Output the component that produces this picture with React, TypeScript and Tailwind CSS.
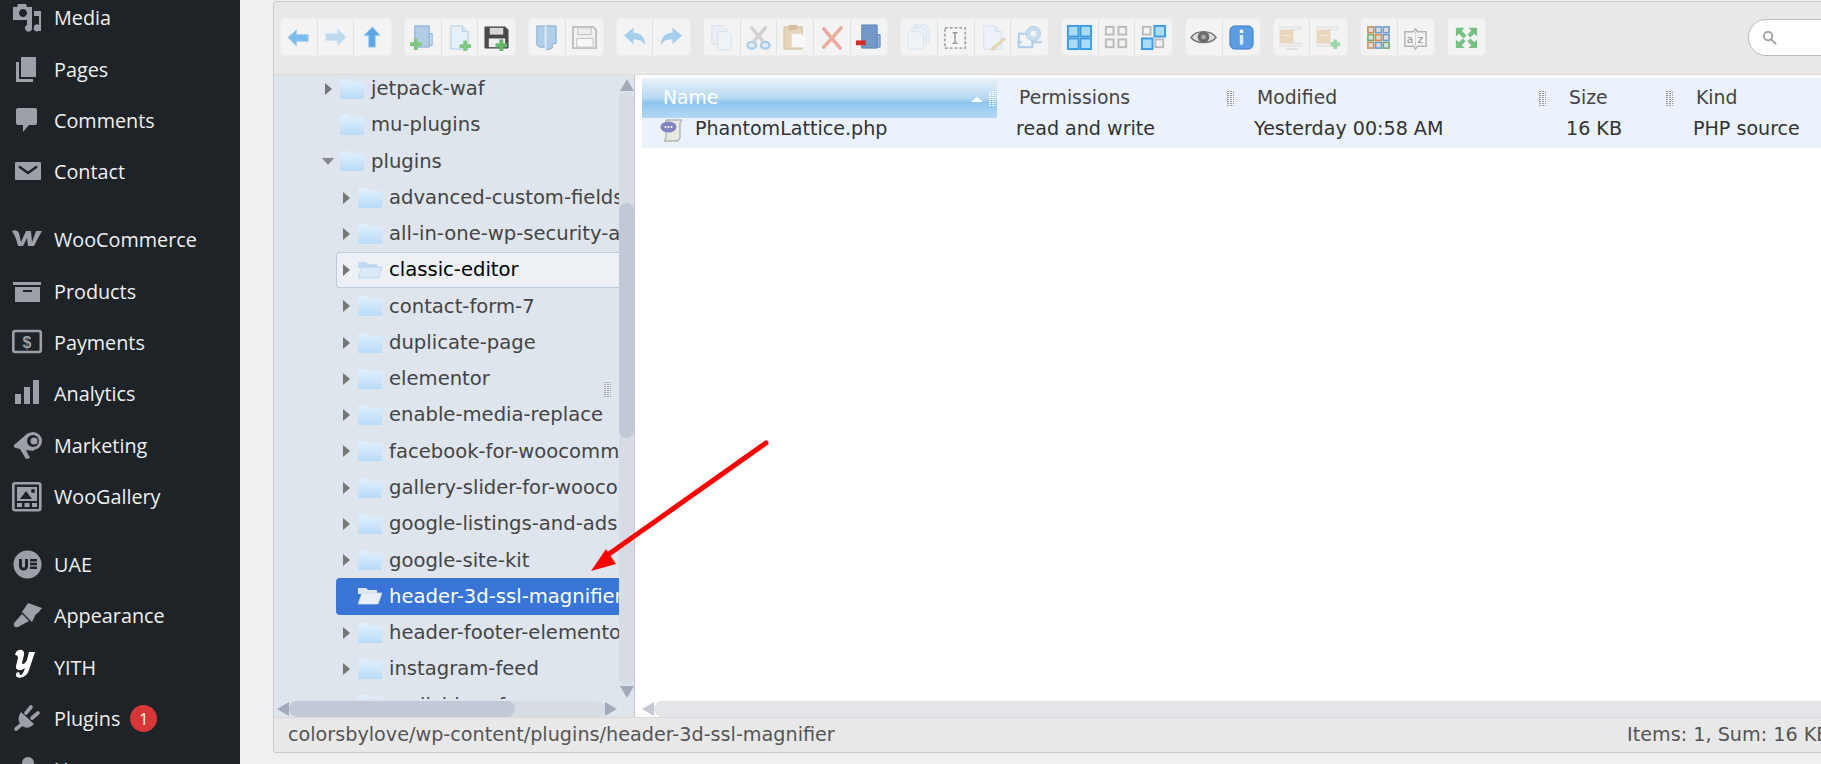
import type { ReactNode } from "react";

const sans = "font-['Open_Sans',sans-serif]";

const G = ({ children, o = 1 }: { children: ReactNode; o?: number }) => (
  <svg viewBox="0 0 28 28" width="27" height="27" opacity={o} className="blur-[0.35px]">
    {children}
  </svg>
);

// ---- toolbar icons ----
const Arrow = ({ dir, o = 1, fill = "#7dbcec" }: { dir: number; o?: number; fill?: string }) => (
  <G o={o}>
    <path transform={`rotate(${dir} 14 14)`} d="M3 14 12 6v5h12v7H12v5z" fill={fill} stroke="#a5d1f2" strokeWidth="1" />
  </G>
);
const BookPlus = () => (
  <G>
    <path d="M6 2h15v22H6z" fill="#b4cde6" stroke="#86abd2" />
    <path d="M21 10h3v12h-3z" fill="#cfe0f0" stroke="#86abd2" />
    <path d="M1 19h4v-4h4v4h4v4H9v4H5v-4H1z" fill="#7fc77f" />
  </G>
);
const PagePlus = () => (
  <G>
    <path d="M5 2h12l6 6v18H5z" fill="#e6f0f9" stroke="#b0cee8" />
    <path d="M17 2v6h6" fill="#d3e5f4" stroke="#b0cee8" />
    <path d="M14 21h4v-4h4v4h4v4h-4v3h-4v-3h-4z" fill="#7fc77f" />
  </G>
);
const Disk = ({ plus, o = 1 }: { plus?: boolean; o?: number }) => (
  <G o={o}>
    <path d="M2 3h21l3 3v19H2z" fill={plus ? "#484848" : "#f2f2f2"} stroke={plus ? "#555" : "#b4b4b4"} strokeWidth={plus ? 1 : 2} />
    <path d="M7 4h14v7H7z" fill={plus ? "#d8d8d8" : "#eee"} stroke={plus ? "none" : "#b4b4b4"} />
    <path d="M6 15h17v9H6z" fill={plus ? "#f0f0f0" : "#fafafa"} stroke={plus ? "none" : "#b4b4b4"} />
    {plus && <path d="M13 20h4v-4h4v4h4v4h-4v4h-4v-4h-4z" fill="#68b468" />}
  </G>
);
const BookOpen = () => (
  <G>
    <path d="M4 2h20v18l-4 1v4l-6 2-2-3H7l-3-2z" fill="#b0cde9" stroke="#86abd2" />
    <path d="M13 2v25" stroke="#dfebf7" strokeWidth="2" />
  </G>
);
const Curve = ({ flip, o = 0.75 }: { flip?: boolean; o?: number }) => (
  <G o={o}>
    <path transform={flip ? "translate(28 0) scale(-1 1)" : undefined} d="M3 12 13 4v5c8 0 12 5 12 13-3-5-6-6-12-6v5z" fill="#8cc2ec" />
  </G>
);
const Copy = () => (
  <G o={0.5}>
    <path d="M4 2h12l3 3v16H4z" fill="#e6eff8" stroke="#b5d0e8" />
    <path d="M10 8h11l3 3v16H10z" fill="#eef4fa" stroke="#b5d0e8" />
  </G>
);
const Scissors = () => (
  <G o={0.7}>
    <path d="M22 3 9 18M6 3l13 15" stroke="#c4c4c4" strokeWidth="3.5" />
    <ellipse cx="7" cy="22" rx="4.5" ry="3.5" fill="#d7e9f7" stroke="#8cbfe6" strokeWidth="2.5" />
    <ellipse cx="21" cy="22" rx="4.5" ry="3.5" fill="#d7e9f7" stroke="#8cbfe6" strokeWidth="2.5" />
  </G>
);
const Clipboard = () => (
  <G o={0.8}>
    <path d="M2 3h19v23H2z" fill="#e4ceae" stroke="#cfb48e" />
    <path d="M7 1h9v5H7z" fill="#cdb08a" />
    <path d="M10 10h10l4 4v10H10z" fill="#fbfbfb" />
  </G>
);
const RedX = () => (
  <G o={0.75}>
    <path d="M6 5 23 25M24 4 6 24" stroke="#e88c7c" strokeWidth="3.5" strokeLinecap="round" />
    <path d="M6 5 23 25M24 4 6 24" stroke="#f4c6bd" strokeWidth="1" strokeDasharray="1 2" />
  </G>
);
const BookMinus = () => (
  <G>
    <path d="M7 1h16v24H7z" fill="#7399c8" stroke="#5d86b6" />
    <path d="M23 11h3v13h-3z" fill="#94b3d6" stroke="#5d86b6" />
    <path d="M1 17h10v5H1z" fill="#d42d2d" />
  </G>
);
const Pages = () => (
  <G o={0.5}>
    <path d="M9 1h11l4 3v15H9z" fill="#e4eef8" stroke="#bcd4ea" />
    <path d="M6 4h11l4 3v15H6z" fill="#e8f1f9" stroke="#bcd4ea" />
    <path d="M2 8h12l4 3v15H2z" fill="#eef4fa" stroke="#bcd4ea" />
  </G>
);
const RenameBox = () => (
  <G>
    <rect x="3" y="4" width="21" height="21" fill="#f7f7f7" stroke="#aaa" strokeWidth="2" strokeDasharray="3 2" />
    <path d="M11 9h5M11 20h5M13.5 9v11" stroke="#999" strokeWidth="1.5" fill="none" />
  </G>
);
const PagePen = () => (
  <G o={0.7}>
    <path d="M5 2h12l6 6v18H5z" fill="#eaf2fa" stroke="#c5d9ec" />
    <path d="M17 2v6h6" fill="#d8e7f5" stroke="#c5d9ec" />
    <path d="m12 26 14-12 1 2-13 12z" fill="#e6cf9a" stroke="#c8ac70" strokeWidth=".6" />
  </G>
);
const ResizeImg = () => (
  <G o={0.6}>
    <rect x="3" y="10" width="14" height="14" fill="none" stroke="#7fb4e0" strokeWidth="2" />
    <circle cx="18" cy="10" r="7.5" fill="#a8d0ee" stroke="#7fb4e0" />
    <circle cx="18" cy="10" r="3" fill="#eef6fc" />
    <path d="M1 19h5M16 19h11" stroke="#7fb4e0" strokeWidth="2" />
  </G>
);
const Grid4 = ({ on }: { on: number[] }) => (
  <G>
    {[
      [2, 2],
      [15, 2],
      [2, 15],
      [15, 15],
    ].map(([x, y], i) =>
      on.includes(i) ? (
        <rect key={i} x={x} y={y} width="11" height="11" fill="#a9dcfb" stroke="#3d9be0" strokeWidth="2" />
      ) : (
        <rect key={i} x={x + 1} y={y + 1} width="8" height="8" fill="#f3f3f3" stroke="#bbb" strokeWidth="2" />
      ),
    )}
  </G>
);
const Eye = () => (
  <G>
    <path d="M1 14c5-8 21-8 26 0-5 7-21 7-26 0z" fill="#ddd" stroke="#777" strokeWidth="1.5" />
    <circle cx="14" cy="13.5" r="6" fill="#6a6a6a" />
    <circle cx="14" cy="13.5" r="2.5" fill="#aaa" />
  </G>
);
const Info = () => (
  <G>
    <rect x="2" y="2" width="24" height="24" rx="5" fill="#5a9de2" stroke="#3d7cc4" />
    <rect x="12.2" y="6" width="3.6" height="3.4" fill="#fff" />
    <rect x="12.2" y="11.5" width="3.6" height="10" fill="#d8e9f9" />
  </G>
);
const Archive = ({ plus }: { plus?: boolean }) => (
  <G o={0.85}>
    <path d="M2 3h22v3H13v14h11v3H2z" fill="#eee" stroke="#ddd" />
    <path d="M2 6h14v14H2z" fill="#e8d2b3" />
    <path d="M5 12h8" stroke="#fff" strokeDasharray="2 1" />
    {plus && <path d="M16 19h3v-3h4v3h3v4h-3v3h-4v-3h-3z" fill="#8ed09a" />}
    {!plus && <path d="M8 26h12" stroke="#ddd" strokeWidth="2" />}
  </G>
);
const ColorGrid = () => {
  const c = ["#c58f5c", "#6d9ad4", "#6d9ad4", "#6dae6d", "#d68f4f", "#6d9ad4", "#c58f5c", "#6d9ad4", "#6dae6d"];
  return (
    <G>
      {c.map((f, i) => (
        <rect key={i} x={3 + (i % 3) * 8} y={3 + Math.floor(i / 3) * 8} width="6" height="6" fill="#ddd" stroke={f} strokeWidth="1.6" />
      ))}
    </G>
  );
};
const Sort = () => (
  <G o={0.85}>
    <path d="M3 8h9l2-3 2 3h9v15H16l-2 3-2-3H3z" fill="#f5f5f5" stroke="#aaa" strokeWidth="1.5" />
    <path d="M14 8v15" stroke="#ccc" />
    <text x="5" y="20" fontSize="11" fill="#777" fontFamily="DejaVu Sans">a</text>
    <text x="16" y="20" fontSize="11" fill="#777" fontFamily="DejaVu Sans">z</text>
  </G>
);
const Full = () => (
  <G>
    <path d="M3 4h9l-3 3 5 5-3 3-5-5-3 3zM25 4v9l-3-3-4 4-3-3 4-4-3-3zM3 25v-9l3 3 4-4 3 3-4 4 3 3zM25 25h-9l3-3-4-4 3-3 4 4 3-3z" fill="#74c180" />
  </G>
);

const groups: ReactNode[][] = [
  [<Arrow dir={0} />, <Arrow dir={180} o={0.45} />, <Arrow dir={90} fill="#5aa6e6" />],
  [<BookPlus />, <PagePlus />, <Disk plus />],
  [<BookOpen />, <Disk o={0.8} />],
  [<Curve />, <Curve flip />],
  [<Copy />, <Scissors />, <Clipboard />, <RedX />, <BookMinus />],
  [<Pages />, <RenameBox />, <PagePen />, <ResizeImg />],
  [<Grid4 on={[0, 1, 2, 3]} />, <Grid4 on={[]} />, <Grid4 on={[1, 2]} />],
  [<Eye />, <Info />],
  [<Archive />, <Archive plus />],
  [<ColorGrid />, <Sort />],
  [<Full />],
];

// ---- tree ----
const Folder = ({ open, selected }: { open?: boolean; selected?: boolean }) => (
  <svg viewBox="0 0 24 22" width="24" height="22" className="shrink-0">
    <defs>
      <linearGradient id="fold" x1="0" y1="0" x2="0" y2="1">
        <stop offset="0" stopColor="#e2f1fe" />
        <stop offset="1" stopColor="#b9dbf8" />
      </linearGradient>
    </defs>
    {open ? (
      <>
        <path d="M0 3h8l2 2h9v4H0z" fill={selected ? "#dfe8f6" : "#c0daf4"} />
        <path d="M4 8h20l-4 11H0z" fill={selected ? "#e9eff9" : "#dbe9f8"} stroke={selected ? "#cfe0f5" : "#a9cdf0"} strokeWidth=".7" />
      </>
    ) : (
      <path d="M0 2.5 2 1h6l2 2.5h14V21H0z" fill="url(#fold)" />
    )}
  </svg>
);

type Row = { name: string; level: 1 | 2; arrow?: "right" | "down"; kind?: "hover" | "selected" };

const rows: Row[] = [
  { name: "jetpack-waf", level: 1, arrow: "right" },
  { name: "mu-plugins", level: 1 },
  { name: "plugins", level: 1, arrow: "down" },
  { name: "advanced-custom-fields", level: 2, arrow: "right" },
  { name: "all-in-one-wp-security-and-firewall", level: 2, arrow: "right" },
  { name: "classic-editor", level: 2, arrow: "right", kind: "hover" },
  { name: "contact-form-7", level: 2, arrow: "right" },
  { name: "duplicate-page", level: 2, arrow: "right" },
  { name: "elementor", level: 2, arrow: "right" },
  { name: "enable-media-replace", level: 2, arrow: "right" },
  { name: "facebook-for-woocommerce", level: 2, arrow: "right" },
  { name: "gallery-slider-for-woocommerce", level: 2, arrow: "right" },
  { name: "google-listings-and-ads", level: 2, arrow: "right" },
  { name: "google-site-kit", level: 2, arrow: "right" },
  { name: "header-3d-ssl-magnifier", level: 2, kind: "selected" },
  { name: "header-footer-elementor", level: 2, arrow: "right" },
  { name: "instagram-feed", level: 2, arrow: "right" },
  { name: "mailchimp-for-woocommerce", level: 2, arrow: "right" },
];

function TreeRow({ r }: { r: Row }) {
  const bg =
    r.kind === "selected"
      ? "bg-[#3875d7] text-white rounded-l-[4px] border-transparent"
      : r.kind === "hover"
        ? "bg-[#edf0f5] text-black border-[#bccbdc] rounded-l-[4px]"
        : "text-[#444] border-transparent";
  return (
    <div
      className={`h-[36.27px] flex items-center border border-r-0 pl-[2px] whitespace-nowrap ${bg} ${r.level === 2 ? "ml-[62px]" : "ml-[44px]"}`}
    >
      <span className="w-[14px] shrink-0 flex justify-center mr-[5px]">
        {r.arrow === "right" && <span className="w-0 h-0 border-y-[6px] border-y-transparent border-l-[7px] border-l-[#777]" />}
        {r.arrow === "down" && <span className="w-0 h-0 border-x-[6px] border-x-transparent border-t-[7px] border-t-[#888]" />}
      </span>
      <Folder open={!!r.kind} selected={r.kind === "selected"} />
      <span className="ml-[7px]">{r.name}</span>
    </div>
  );
}

// ---- admin sidebar ----
const ic = "#9ca1a7";
const bgDark = "#1d2327";
const menuIcons: Record<string, ReactNode> = {
  Media: (
    <>
      <path fillRule="evenodd" d="M1 4h4l1-3h8l1 3h5v13H1zm10 2a4 4 0 1 0 .01 0z" fill={ic} />
      <path d="M22 8h7v20h-2.500a3.500 3.500 0 1 1 .5-6V13h-5zM15 16h5v9a3.500 3.500 0 1 1-5-3z" fill={ic} />
      <path d="M20 17h2v8h-2z" fill={bgDark} />
    </>
  ),
  Pages: (
    <>
      <path d="M9 2h15v20H9z" fill={ic} />
      <path d="M4 7h3v17h14v3H4z" fill={ic} />
    </>
  ),
  Comments: <path d="M6 2h17a2 2 0 0 1 2 2v13a2 2 0 0 1-2 2h-6l-6 7v-7H6a2 2 0 0 1-2-2V4a2 2 0 0 1 2-2z" fill={ic} />,
  Contact: (
    <>
      <rect x="3" y="5" width="26" height="18" rx="1" fill={ic} />
      <path d="M7 9.500 16 16l9-6.500" fill="none" stroke={bgDark} strokeWidth="2.6" />
    </>
  ),
  WooCommerce: (
    <path d="M0 6q5-2 7 2l2 9 5-11h5l1 11 4-11h6q-4 7-8 15h-6l-1-8-4 8H6Q4 12 0 6z" fill={ic} />
  ),
  Products: (
    <>
      <path d="M1 5h28v3H1z" fill={ic} />
      <path fillRule="evenodd" d="M3 10h25v15H3zm8 3v2h9v-2z" fill={ic} />
    </>
  ),
  Payments: (
    <>
      <rect x="1.300" y="3" width="27.500" height="21" rx="2" fill="none" stroke={ic} strokeWidth="2.600" />
      <text x="15" y="19.500" textAnchor="middle" fontSize="16" fontWeight="700" fill={ic} fontFamily="Liberation Sans">$</text>
    </>
  ),
  Analytics: <path d="M3 15h6v10H3zM12 8h6v17h-6zM21 1h6v24h-6z" fill={ic} />,
  Marketing: (
    <>
      <path d="M2 15 16 3l6 18-8-1 4 8-4 1-6-10-4-1q-3-1-2-3z" fill={ic} />
      <circle cx="21" cy="11" r="9" fill={ic} />
      <circle cx="21" cy="11" r="6" fill={bgDark} />
      <circle cx="22" cy="11" r="3.500" fill={ic} />
    </>
  ),
  WooGallery: (
    <>
      <rect x="1.300" y="1.300" width="27" height="27" rx="2" fill="none" stroke={ic} strokeWidth="2.600" />
      <path d="M5 5h20v14H5z" fill={ic} />
      <path d="M8 17l6-8 6 8z" fill={bgDark} />
      <circle cx="21" cy="9" r="2" fill={bgDark} />
      <path d="M5 21h5v4H5zM12.500 21h5v4h-5zM20 21h5v4h-5z" fill={ic} />
    </>
  ),
  UAE: (
    <>
      <circle cx="15.500" cy="14.500" r="14" fill={ic} />
      <path d="M7 9h3v7c0 2 3 2 3 0V9h3v7c0 6-9 6-9 0z" fill={bgDark} />
      <path d="M18 9h7v2.500h-7zM18 12.800h7v2.500h-7zM18 16.600h7v2.500h-7z" fill={bgDark} />
    </>
  ),
  Appearance: (
    <>
      <path d="M16 2 30 7l-4 5-2 1-4 8-10-10z" fill={ic} />
      <path d="M10 13l7 7L6 26q-5 1-4-4z" fill={ic} />
    </>
  ),
  YITH: (
    <path
      transform="translate(2 -4)"
      d="M2 4c4-4 9-2 8 3l-2 8c0 2 3 1 5-3l2-8h6l-6 18c-2 7-9 9-12 7-2-2-1-5 2-5 1 1 0 3 2 3 2-1 3-4 4-7-3 3-10 3-9-2l2-8c0-2-1-3-3-3z"
      fill="#fff"
    />
  ),
  Plugins: (
    <>
      <path d="M9 8 22 20q-7 7-13 1-5-6 0-13z" fill={ic} />
      <path d="m14 9 5-6M20 14l6-5M10 20l-6 5" stroke={ic} strokeWidth="3.600" strokeLinecap="round" />
    </>
  ),
  Users: <circle cx="16" cy="8" r="6" fill={ic} />,
};

const menu: { name: string; gap?: boolean; badge?: string }[] = [
  { name: "Media" },
  { name: "Pages" },
  { name: "Comments" },
  { name: "Contact" },
  { name: "WooCommerce", gap: true },
  { name: "Products" },
  { name: "Payments" },
  { name: "Analytics" },
  { name: "Marketing" },
  { name: "WooGallery" },
  { name: "UAE", gap: true },
  { name: "Appearance" },
  { name: "YITH" },
  { name: "Plugins", badge: "1" },
  { name: "Users" },
];

function Sidebar() {
  return (
    <aside className={`w-[240px] shrink-0 bg-[#1d2327] text-[#f0f0f1] text-[19.8px] ${sans} -mt-[7.4px]`}>
      {menu.map((m) => (
        <div key={m.name} className={`h-[51.27px] flex items-center pl-[12px] ${m.gap ? "mt-[17px]" : ""}`}>
          <svg viewBox="0 0 30 30" width="30" height="30" className="shrink-0 overflow-visible">
            {menuIcons[m.name]}
          </svg>
          <span className="ml-[12px]">{m.name}</span>
          {m.badge && (
            <span className="ml-[10px] w-[27px] h-[27px] rounded-full bg-[#d63638] text-white text-[16px] flex items-center justify-center">
              {m.badge}
            </span>
          )}
        </div>
      ))}
    </aside>
  );
}

// ---- file table ----
const Grip = ({ c = "#999" }: { c?: string }) => (
  <span className="flex gap-[1px]">
    <span className="w-[2px] h-[15px]" style={{ backgroundImage: `repeating-linear-gradient(${c} 0 1px, transparent 1px 2px)` }} />
    <span className="w-[2px] h-[15px]" style={{ backgroundImage: `repeating-linear-gradient(${c} 0 1px, transparent 1px 2px)` }} />
    <span className="w-[1px] h-[15px]" style={{ backgroundImage: `repeating-linear-gradient(${c} 0 1px, transparent 1px 2px)` }} />
  </span>
);

const cols = [
  { label: "Permissions", value: "read and write", w: "w-[238px]" },
  { label: "Modified", value: "Yesterday 00:58 AM", w: "w-[312px]" },
  { label: "Size", value: "16 KB", w: "w-[127px]" },
  { label: "Kind", value: "PHP source", w: "w-[200px]" },
];

const ArrowUp = () => <span className="w-0 h-0 border-x-[7px] border-x-transparent border-b-[12px] border-b-[#a3abbb]" />;
const ArrowDown = () => <span className="w-0 h-0 border-x-[7px] border-x-transparent border-t-[12px] border-t-[#a3abbb]" />;
const ArrowLeft = ({ c = "border-r-[#a3abbb]" }: { c?: string }) => (
  <span className={`w-0 h-0 border-y-[7px] border-y-transparent border-r-[12px] ${c}`} />
);
const ArrowRight = () => <span className="w-0 h-0 border-y-[7px] border-y-transparent border-l-[12px] border-l-[#a3abbb]" />;

export default function App() {
  return (
    <div className="relative w-[1821px] h-[764px] overflow-hidden flex bg-[#f0f0f1] font-['DejaVu_Sans',sans-serif]">
      <Sidebar />
      <main className="flex-1 min-w-0 pl-[33px] pt-[1px]">
        <div className="w-[1700px] h-[752px] flex flex-col border border-[#c9c9c9] rounded-l-[3px] bg-[#e8e8e8]">
          {/* toolbar */}
          <div className="h-[73px] shrink-0 flex items-center pl-[7px] pb-[2px] gap-[14px] border-b border-[#dcdcdc]">
            {groups.map((g, i) => (
              <div key={i} className="flex rounded-[4px] bg-[#f3f3f3] shadow-[0_0_0_1px_#ececec] divide-x divide-[#e0e0e0]">
                {g.map((icon, j) => (
                  <div key={j} className="w-[36.7px] h-[36px] flex items-center justify-center">
                    {icon}
                  </div>
                ))}
              </div>
            ))}
            <div className="ml-[249px] w-[120px] h-[37px] shrink-0 rounded-l-[18px] border border-[#bbb] bg-white flex items-center pl-[13px]">
              <svg viewBox="0 0 16 16" width="15" height="15" fill="none" stroke="#999" strokeWidth="1.8">
                <circle cx="6.500" cy="6.500" r="4.500" />
                <path d="m10 10 5 5" />
              </svg>
            </div>
          </div>

          {/* panes */}
          <div className="h-[642px] shrink-0 flex">
            {/* tree */}
            <div className="relative w-[361px] shrink-0 bg-[#dfe5ed] border-r border-[#c9c9c9] flex flex-col">
              <div className="flex flex-1 min-h-0">
                <div className="flex-1 min-w-0 overflow-hidden text-[19.6px] mb-[2px]">
                  <div className="-mt-[4.4px]">
                    {rows.map((r) => (
                      <TreeRow key={r.name} r={r} />
                    ))}
                  </div>
                </div>
                <div className="w-[15px] shrink-0 flex flex-col items-center pt-[4px] pb-[3px]">
                  <ArrowUp />
                  <div className="flex-1 w-full rounded-full bg-[#d7dbe3] mt-[1px] mb-[1px] pt-[111px] pb-[247px]">
                    <div className="h-full rounded-full bg-[#c2c9d6]" />
                  </div>
                  <ArrowDown />
                </div>
              </div>
              <div className="h-[16px] shrink-0 flex items-center pl-[3px] pr-[17px]">
                <ArrowLeft />
                <div className="flex-1 h-full rounded-full bg-[#d7dbe3] pr-[90px]">
                  <div className="h-full rounded-full bg-[#c2c9d6]" />
                </div>
                <ArrowRight />
              </div>
              {/* column resize grip */}
              <span className="absolute left-[330px] top-[307px]">
                <Grip c="#aaa" />
              </span>
            </div>

            {/* file list */}
            <div className="flex-1 min-w-0 bg-white flex flex-col">
              <div className="flex-1 min-h-0 pl-[7px] pt-[3px]">
                <div className="h-[40px] flex items-center pt-[1px] bg-[#ebf2fc] text-[18.8px] text-[#444]">
                  <div className="relative w-[355px] h-full shrink-0 flex items-center pl-[21px] text-white bg-[linear-gradient(#e9f1f8,#b5d8f2_50%,#8ec5ee_60%,#b4d9f3)]">
                    Name
                    <span className="absolute right-[14px] top-[18px] w-0 h-0 border-x-[6px] border-x-transparent border-b-[5px] border-b-white" />
                    <span className="absolute right-[1px] top-[12px]">
                      <Grip c="#fff" />
                    </span>
                  </div>
                  {cols.map((c) => (
                    <div key={c.label} className={`relative ${c.w} h-full shrink-0 flex items-center pl-[22px]`}>
                      {c.label}
                      <span className="absolute right-[1px] top-[12px]">
                        {c.label !== "Kind" && <Grip />}
                      </span>
                    </div>
                  ))}
                </div>
                <div className="h-[30px] flex items-center pb-[7px] bg-[#ebf2fc] text-[19.1px] text-[#333]">
                  <div className="w-[355px] shrink-0 flex items-center pl-[18px]">
                    <svg viewBox="0 0 24 24" width="24" height="24" className="shrink-0">
                      <path d="M6 2h16l-2 3v15l-2 3H4l2-3z" fill="#e9e9e4" stroke="#999" />
                      <ellipse cx="8.500" cy="9" rx="8" ry="5.500" fill="#8284c0" />
                      <circle cx="5.500" cy="9" r="1" fill="#fff" />
                      <circle cx="8.500" cy="9" r="1" fill="#fff" />
                      <circle cx="11.500" cy="9" r="1" fill="#fff" />
                    </svg>
                    <span className="ml-[11px]">PhantomLattice.php</span>
                  </div>
                  {cols.map((c) => (
                    <div key={c.label} className={`${c.w} shrink-0 pl-[19px] whitespace-nowrap`}>
                      {c.value}
                    </div>
                  ))}
                </div>
              </div>
              <div className="h-[16px] shrink-0 flex items-center pl-[7px]">
                <ArrowLeft c="border-r-[#c3c8d3]" />
                <div className="flex-1 h-full rounded-l-full bg-[#e4e4e9]" />
              </div>
            </div>
          </div>

          {/* status bar */}
          <div className="flex-1 flex items-center pl-[14px] text-[19.2px] text-[#555] border-t border-[#d8d8d8] whitespace-nowrap">
            <span className="w-[1339px] shrink-0">colorsbylove/wp-content/plugins/header-3d-ssl-magnifier</span>
            <span>Items: 1, Sum: 16 KB</span>
          </div>
        </div>
      </main>

      {/* red annotation arrow */}
      <svg className="absolute left-[580px] top-[430px] pointer-events-none" width="200" height="150" viewBox="0 0 200 150">
        <path d="M186 13 29 124" stroke="#f00" strokeWidth="5" strokeLinecap="round" />
        <path d="M11 141 26 119 36 134z" fill="#f00" />
      </svg>
    </div>
  );
}
